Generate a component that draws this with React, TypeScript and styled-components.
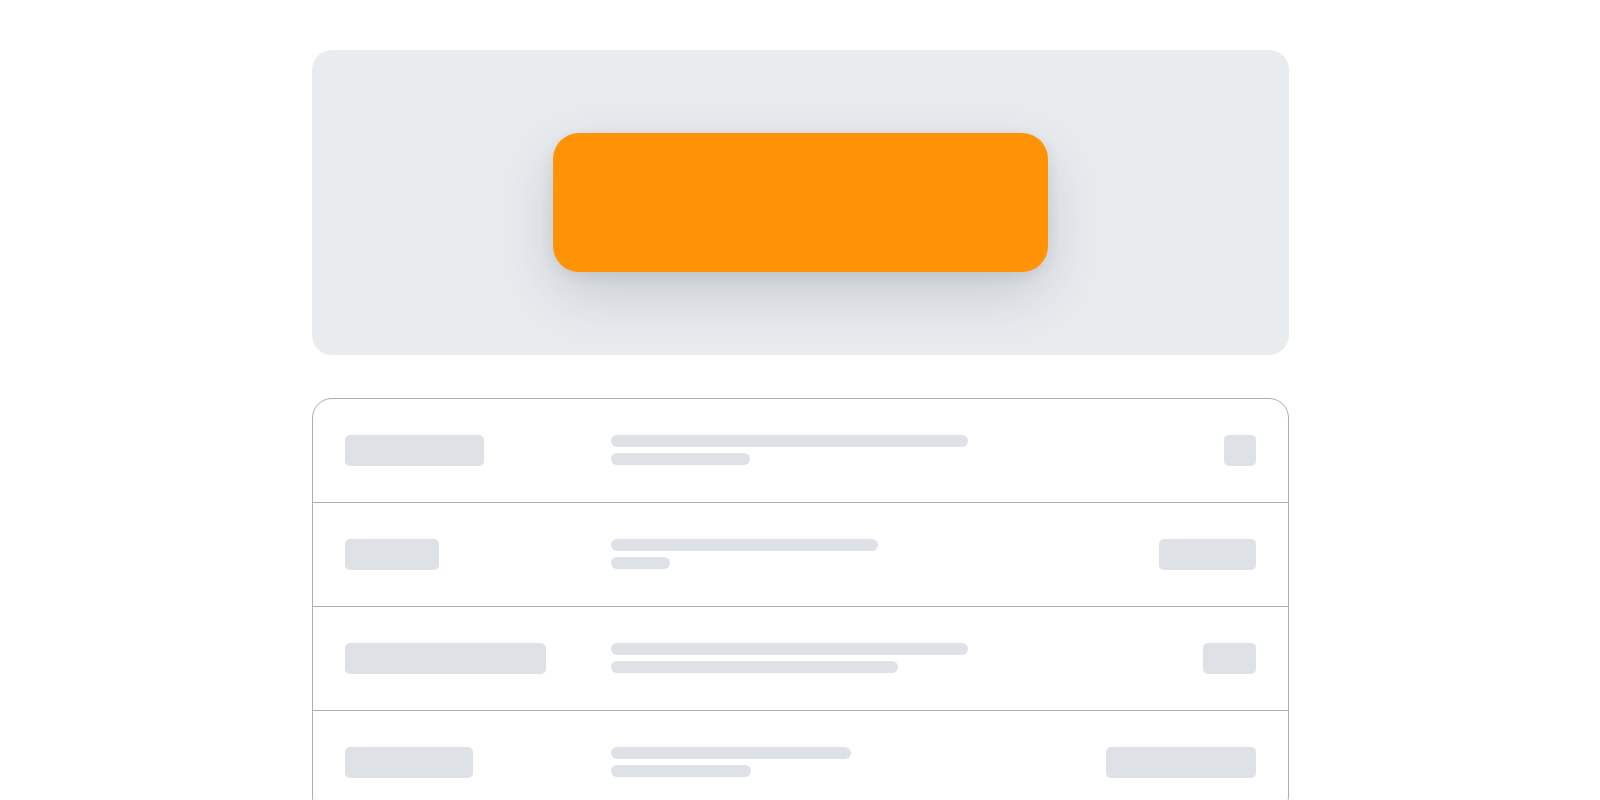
import React from 'react';
import styled, { createGlobalStyle } from 'styled-components';

const GlobalStyle = createGlobalStyle`
  html, body {
    margin: 0;
    padding: 0;
    background: #ffffff;
    font-family: Inter, "Liberation Sans", sans-serif;
  }
`;

// Layout
const Page = styled.main`
  padding: 50px 311px 0 312px;
  display: flex;
  flex-direction: column;
  gap: 43px;
`;

const Hero = styled.section`
  height: 305px;
  background: #e9ecef;
  border-radius: 20px;
  display: flex;
  align-items: center;
  justify-content: center;
`;

const CtaBlock = styled.div`
  width: 495px;
  height: 139px;
  background: #ff9305;
  border-radius: 26px;
  box-shadow: 0 22px 60px rgba(30, 41, 59, 0.17), 0 4px 14px rgba(30, 41, 59, 0.08);
`;

const List = styled.section`
  border: 1px solid #a9aeb4;
  border-radius: 20px;
  overflow: hidden;
`;

const Row = styled.div`
  box-sizing: border-box;
  height: 104px;
  padding: 36px 32px 0;
  display: grid;
  grid-template-columns: 242px 1fr auto;
  column-gap: 24px;
  align-items: start;
  border-bottom: 1px solid #a9aeb4;
`;

const Block = styled.div<{ $w: number }>`
  width: ${(p) => p.$w}px;
  height: 31px;
  background: #dee1e5;
  border-radius: 5px;
`;

const Lines = styled.div`
  display: flex;
  flex-direction: column;
  gap: 6px;
`;

const Line = styled.div<{ $w: number }>`
  width: ${(p) => p.$w}px;
  height: 12px;
  background: #dee1e5;
  border-radius: 6px;
`;

type SkeletonRow = {
  left: number;
  top: number;
  bottom: number;
  right: number;
};

const rows: SkeletonRow[] = [
  { left: 139, top: 357, bottom: 139, right: 32 },
  { left: 94, top: 267, bottom: 59, right: 97 },
  { left: 201, top: 357, bottom: 287, right: 53 },
  { left: 128, top: 240, bottom: 140, right: 150 },
];

function App(): JSX.Element {
  return (
    <>
      <GlobalStyle />
      <Page>
        <Hero>
          <CtaBlock />
        </Hero>
        <List>
          {rows.map((r, i) => (
            <Row key={i}>
              <Block $w={r.left} />
              <Lines>
                <Line $w={r.top} />
                <Line $w={r.bottom} />
              </Lines>
              <Block $w={r.right} />
            </Row>
          ))}
        </List>
      </Page>
    </>
  );
}

export default App;
